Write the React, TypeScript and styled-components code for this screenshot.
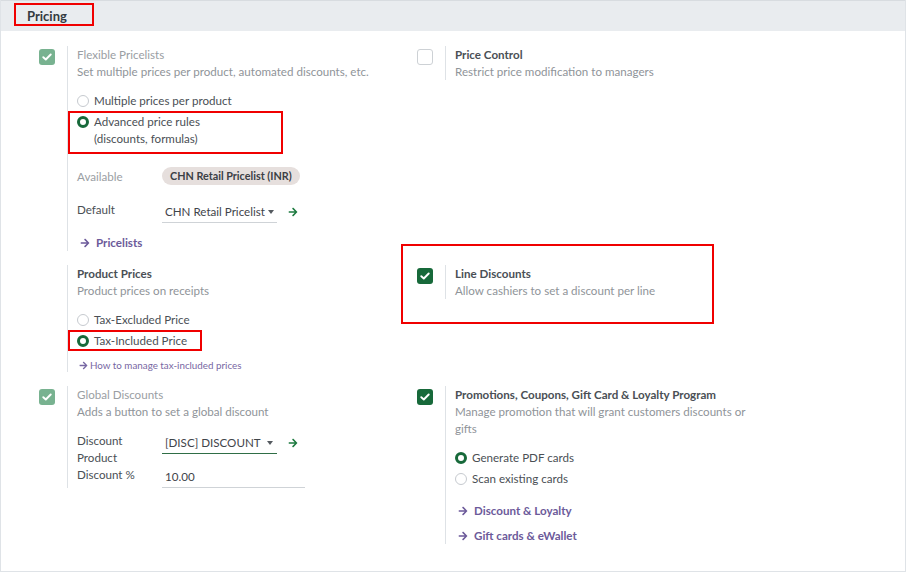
import React from "react";
import styled, { createGlobalStyle, css } from "styled-components";
import { FaArrowRight } from "react-icons/fa";

const GlobalStyle = createGlobalStyle`
  html, body {
    margin: 0;
    padding: 0;
    background: #ffffff;
  }
  body {
    font-family: "Lato", "Liberation Sans", sans-serif;
    font-size: 11.6px;
    color: #4a4f55;
  }
`;

type Box = { top: number; left: number; width: number; height: number };

const Highlight = styled.div<{ $box: Box; $inline?: boolean }>`
  position: relative;
  display: ${(p) => (p.$inline ? "inline-block" : "block")};

  &::after {
    content: "";
    position: absolute;
    top: ${(p) => p.$box.top}px;
    left: ${(p) => p.$box.left}px;
    width: ${(p) => p.$box.width}px;
    height: ${(p) => p.$box.height}px;
    box-sizing: border-box;
    border: 2px solid #f00000;
    pointer-events: none;
  }
`;

const Page = styled.div`
  height: 572px;
  box-sizing: border-box;
  border: 1px solid #dfe3e7;
  border-top: 0;
`;

const SectionHeader = styled.div`
  height: 31px;
  box-sizing: border-box;
  background: #e9ecef;
  border-top: 1px solid #d8dce0;
  padding-left: 26px;
  display: flex;
  align-items: center;
`;

const SectionTitle = styled.span`
  font-size: 13px;
  font-weight: 700;
  color: #343a40;
  line-height: 17px;
`;

const Grid = styled.div`
  display: grid;
  grid-template-columns: 378px 378px;
  row-gap: 14px;
  padding-top: 15px;
  align-items: start;
`;

const Setting = styled.div`
  display: flex;
  align-items: stretch;
`;

const BoxArea = styled.div`
  width: 66px;
  flex-shrink: 0;
  box-sizing: border-box;
  padding: 3px 0 0 38px;
`;

const Content = styled.div`
  border-left: 1px solid #dee2e6;
  padding-left: 9px;
  width: 300px;
  line-height: 17px;
`;

const Title = styled.div<{ $muted?: boolean }>`
  font-weight: ${(p) => (p.$muted ? 400 : 700)};
  color: ${(p) => (p.$muted ? "#9a9ea3" : "#4a4f55")};
`;

const Description = styled.div`
  color: #8f9499;
`;

const Checkbox = styled.span<{ $state: "off" | "on" | "readonly" }>`
  width: 16px;
  height: 16px;
  box-sizing: border-box;
  border-radius: 3px;
  display: flex;
  align-items: center;
  justify-content: center;
  ${(p) =>
    p.$state === "off"
      ? css`
          border: 1px solid #cdd1d5;
          background: #fff;
        `
      : css`
          background: ${p.$state === "on" ? "#17693a" : "#78b290"};
        `}
`;

const RadioList = styled.div<{ $mt: number }>`
  margin-top: ${(p) => p.$mt}px;
  display: flex;
  flex-direction: column;
  gap: 4px;
`;

const RadioItem = styled.label`
  display: flex;
  align-items: flex-start;
  gap: 5px;
  color: #4a4f55;
`;

const RadioDot = styled.span<{ $checked?: boolean }>`
  width: 12px;
  height: 12px;
  margin-top: 2.5px;
  box-sizing: border-box;
  border-radius: 50%;
  flex-shrink: 0;
  background: #fff;
  border: ${(p) => (p.$checked ? "3.5px solid #17693a" : "1px solid #c6cacf")};
`;

const FieldGrid = styled.div<{ $mt: number; $gap?: number }>`
  margin-top: ${(p) => p.$mt}px;
  display: grid;
  grid-template-columns: 85px auto;
  row-gap: ${(p) => p.$gap ?? 0}px;
  align-items: start;
`;

const FieldLabel = styled.div<{ $muted?: boolean }>`
  color: ${(p) => (p.$muted ? "#9a9ea3" : "#4a4f55")};
  line-height: 17px;
  padding-top: ${(p) => (p.$muted ? 0.5 : 0)}px;
`;

const Tag = styled.span`
  display: inline-block;
  height: 18px;
  line-height: 18px;
  padding: 0 8px;
  border-radius: 9px;
  background: #e6dfdd;
  font-size: 10.8px;
  font-weight: 700;
  color: #3b4045;
`;

const FieldRow = styled.div`
  display: flex;
  align-items: center;
  gap: 11px;
`;

const Input = styled.div<{ $width: number; $focus?: boolean }>`
  width: ${(p) => p.$width}px;
  height: 22px;
  box-sizing: border-box;
  padding: 2px 3px 0;
  border-bottom: 1px solid ${(p) => (p.$focus ? "#2f6e46" : "#cfd3d7")};
  display: flex;
  align-items: flex-start;
  justify-content: space-between;
  white-space: nowrap;
  color: #3f444a;
`;

const Caret = styled.span`
  flex-shrink: 0;
  width: 0;
  height: 0;
  margin: 7px 1px 0 3px;
  border-left: 3px solid transparent;
  border-right: 3px solid transparent;
  border-top: 4px solid #555a60;
`;

const GoArrow = styled(FaArrowRight)`
  color: #1d7a3f;
  font-size: 10px;
`;

const LinkLine = styled.a<{ $mt: number; $small?: boolean }>`
  margin-top: ${(p) => p.$mt}px;
  display: flex;
  align-items: center;
  gap: ${(p) => (p.$small ? 2 : 6)}px;
  padding-left: ${(p) => (p.$small ? 2 : 3)}px;
  color: ${(p) => (p.$small ? "#7767a3" : "#6c5a9a")};
  font-weight: ${(p) => (p.$small ? 400 : 700)};
  font-size: ${(p) => (p.$small ? 9.8 : 11.6)}px;
  line-height: ${(p) => (p.$small ? 14 : 17)}px;
  text-decoration: none;
  cursor: pointer;

  svg {
    font-size: ${(p) => (p.$small ? 9 : 10)}px;
  }
`;

const Check = () => (
  <svg width="10" height="8" viewBox="0 0 10 8" fill="none">
    <path d="M1.3 4.2 L3.8 6.5 L8.7 1.5" stroke="#fff" strokeWidth="1.9" strokeLinecap="round" strokeLinejoin="round" />
  </svg>
);

const SettingCheck = ({ state }: { state: "off" | "on" | "readonly" }) => (
  <BoxArea>
    <Checkbox $state={state}>{state !== "off" && <Check />}</Checkbox>
  </BoxArea>
);

export default function App() {
  return (
    <>
      <GlobalStyle />
      <Page>
        <SectionHeader>
          <Highlight $inline $box={{ top: -5, left: -13, width: 80, height: 23 }}>
            <SectionTitle>Pricing</SectionTitle>
          </Highlight>
        </SectionHeader>

        <Grid>
          <Setting>
            <SettingCheck state="readonly" />
            <Content>
              <Title $muted>Flexible Pricelists</Title>
              <Description>Set multiple prices per product, automated discounts, etc.</Description>
              <RadioList $mt={12}>
                <RadioItem>
                  <RadioDot />
                  Multiple prices per product
                </RadioItem>
                <Highlight $box={{ top: -2, left: -9, width: 215, height: 43 }}>
                  <RadioItem>
                    <RadioDot $checked />
                    <span>
                      Advanced price rules
                      <br />
                      (discounts, formulas)
                    </span>
                  </RadioItem>
                </Highlight>
              </RadioList>
              <FieldGrid $mt={20} $gap={16}>
                <FieldLabel $muted>Available</FieldLabel>
                <div>
                  <Tag>CHN Retail Pricelist (INR)</Tag>
                </div>
                <FieldLabel>Default</FieldLabel>
                <FieldRow>
                  <Input $width={115}>
                    CHN Retail Pricelist
                    <Caret />
                  </Input>
                  <GoArrow />
                </FieldRow>
              </FieldGrid>
              <LinkLine $mt={11}>
                <FaArrowRight />
                Pricelists
              </LinkLine>
            </Content>
          </Setting>

          <Setting>
            <SettingCheck state="off" />
            <Content>
              <Title>Price Control</Title>
              <Description>Restrict price modification to managers</Description>
            </Content>
          </Setting>

          <Setting>
            <BoxArea />
            <Content>
              <Title>Product Prices</Title>
              <Description>Product prices on receipts</Description>
              <RadioList $mt={12}>
                <RadioItem>
                  <RadioDot />
                  Tax-Excluded Price
                </RadioItem>
                <Highlight $box={{ top: -2, left: -9, width: 134, height: 21 }}>
                  <RadioItem>
                    <RadioDot $checked />
                    Tax-Included Price
                  </RadioItem>
                </Highlight>
              </RadioList>
              <LinkLine $mt={9} $small>
                <FaArrowRight />
                How to manage tax-included prices
              </LinkLine>
            </Content>
          </Setting>

          <Highlight $box={{ top: -21, left: 22, width: 313, height: 80 }}>
            <Setting>
              <SettingCheck state="on" />
              <Content>
                <Title>Line Discounts</Title>
                <Description>Allow cashiers to set a discount per line</Description>
              </Content>
            </Setting>
          </Highlight>

          <Setting>
            <SettingCheck state="readonly" />
            <Content>
              <Title $muted>Global Discounts</Title>
              <Description>Adds a button to set a global discount</Description>
              <FieldGrid $mt={12}>
                <FieldLabel>
                  Discount
                  <br />
                  Product
                </FieldLabel>
                <FieldRow>
                  <Input $width={115} $focus>
                    [DISC] DISCOUNT
                    <Caret />
                  </Input>
                  <GoArrow />
                </FieldRow>
                <FieldLabel>Discount %</FieldLabel>
                <Input $width={143}>10.00</Input>
              </FieldGrid>
            </Content>
          </Setting>

          <Setting>
            <SettingCheck state="on" />
            <Content>
              <Title>Promotions, Coupons, Gift Card &amp; Loyalty Program</Title>
              <Description>Manage promotion that will grant customers discounts or gifts</Description>
              <RadioList $mt={12}>
                <RadioItem>
                  <RadioDot $checked />
                  Generate PDF cards
                </RadioItem>
                <RadioItem>
                  <RadioDot />
                  Scan existing cards
                </RadioItem>
              </RadioList>
              <LinkLine $mt={15}>
                <FaArrowRight />
                Discount &amp; Loyalty
              </LinkLine>
              <LinkLine $mt={8}>
                <FaArrowRight />
                Gift cards &amp; eWallet
              </LinkLine>
            </Content>
          </Setting>
        </Grid>
      </Page>
    </>
  );
}
